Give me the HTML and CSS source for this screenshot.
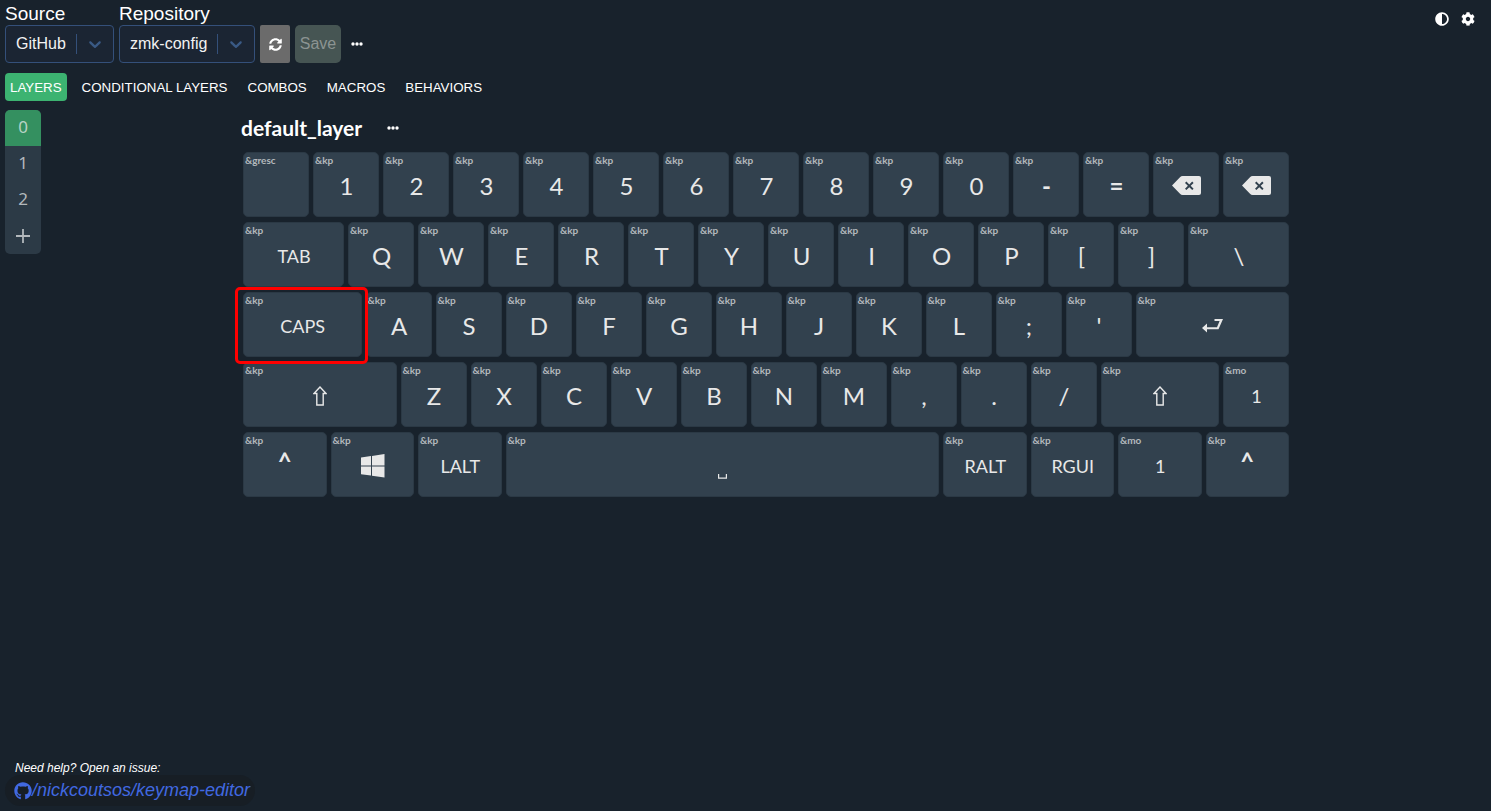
FILE: index.html
```html
<!DOCTYPE html>
<html lang="en">
<head>
<meta charset="utf-8">
<title>Keymap Editor</title>
<link rel="stylesheet" href="styles.css">
</head>
<body>
<svg class="defs" aria-hidden="true">
  <symbol id="chevron" viewBox="0 0 20 20"><path d="M4.516 7.548c.436-.446 1.043-.481 1.576 0L10 11.295l3.908-3.747c.533-.481 1.141-.446 1.574 0 .436.445.408 1.197 0 1.615-.406.418-4.695 4.502-4.695 4.502a1.095 1.095 0 0 1-1.576 0S4.924 9.581 4.516 9.163c-.409-.418-.436-1.170 0-1.615z"/></symbol>
  <symbol id="dots" viewBox="0 0 12 4"><circle cx="2" cy="2" r="1.7"/><circle cx="6" cy="2" r="1.7"/><circle cx="10" cy="2" r="1.7"/></symbol>
  <symbol id="backspace" viewBox="0 0 29 19"><path fill-rule="evenodd" d="M0 9.500 8 1.200C8.800.4 9.600 0 10.600 0H27a2 2 0 0 1 2 2v15a2 2 0 0 1-2 2H10.600c-1 0-1.800-.4-2.600-1.200zM13 6.900l2.900 2.900-2.900 2.900 1.400 1.400 2.900-2.900 2.900 2.900 1.400-1.400-2.900-2.900 2.900-2.900-1.400-1.400-2.900 2.900-2.900-2.900z"/></symbol>
  <symbol id="enter" viewBox="0 0 21 14"><path d="M12.500 0H21L16.500 10.300H5V13.500L0 9 5 4.500V8.300H15L17.600 2H12.500z"/></symbol>
  <symbol id="shift" viewBox="0 0 14 20"><path fill="none" stroke="currentColor" stroke-width="1.400" d="M7 1 1 7.500H3.800V19H10.200V7.500H13z"/></symbol>
  <symbol id="windows" viewBox="0 0 24 24"><path d="M0 3.500 10 2.100V11.400H0zM11 2 23.500 0V11.400H11zM0 12.400H10V21.600L0 20.200zM11 12.400H23.500V23.500L11 21.700z"/></symbol>
  <symbol id="space" viewBox="0 0 9 5"><path fill="none" stroke="currentColor" stroke-width="1.200" d="M.6 0V4.200H8.400V0"/></symbol>
</svg>
<header class="toolbar">
  <div class="sources">
    <div class="field">
      <label for="source">Source</label>
      <div class="picker picker-source"><select id="source"><option>GitHub</option></select><span class="picker-mark"><svg><use href="#chevron"/></svg></span></div>
    </div>
    <div class="field">
      <label for="repo">Repository</label>
      <div class="picker picker-repo"><select id="repo"><option>zmk-config</option></select><span class="picker-mark"><svg><use href="#chevron"/></svg></span></div>
    </div>
    <button class="refresh" aria-label="Refresh"><svg viewBox="0 0 512 512"><path d="M370.720 133.280C339.458 104.008 298.888 87.962 255.848 88c-77.458.068-144.328 53.178-162.791 126.850-1.344 5.363-6.122 9.150-11.651 9.150H24.103c-7.498 0-13.194-6.807-11.807-14.176C33.933 94.924 134.813 8 256 8c66.448 0 126.791 26.136 171.315 68.685L463.030 40.970C478.149 25.851 504 36.559 504 57.941V192c0 13.255-10.745 24-24 24H345.941c-21.382 0-32.090-25.851-16.971-40.971l41.750-41.749zM32 296h134.059c21.382 0 32.090 25.851 16.971 40.971l-41.750 41.750c31.262 29.273 71.835 45.319 114.876 45.280 77.418-.070 144.315-53.144 162.787-126.849 1.344-5.363 6.122-9.150 11.651-9.150h57.304c7.498 0 13.194 6.807 11.807 14.176C478.067 417.076 377.187 504 256 504c-66.448 0-126.791-26.136-171.315-68.685L48.970 471.030C33.851 486.149 8 475.441 8 454.059V320c0-13.255 10.745-24 24-24z"/></svg></button>
    <button class="save" disabled>Save</button>
    <button class="more" aria-label="More actions"><svg><use href="#dots"/></svg></button>
  </div>
  <div class="settings">
    <button aria-label="Theme"><svg viewBox="0 0 512 512"><path d="M8 256c0 136.966 111.033 248 248 248s248-111.034 248-248S392.966 8 256 8 8 119.033 8 256zm248 184V72c101.705 0 184 82.311 184 184 0 101.705-82.311 184-184 184z"/></svg></button>
    <button aria-label="Settings"><svg viewBox="0 0 512 512"><path d="M487.400 315.700l-42.600-24.600c4.300-23.200 4.300-47 0-70.200l42.600-24.600c4.900-2.800 7.100-8.600 5.500-14-11.100-35.600-30-67.800-54.700-94.600-3.800-4.100-10-5.100-14.800-2.300L380.800 110c-17.900-15.400-38.500-27.300-60.800-35.100V25.800c0-5.600-3.900-10.500-9.400-11.700-36.700-8.200-74.300-7.800-109.200 0-5.500 1.200-9.400 6.100-9.400 11.700V75c-22.200 7.900-42.800 19.800-60.800 35.100L88.700 85.500c-4.900-2.800-11-1.900-14.800 2.300-24.700 26.700-43.600 58.900-54.700 94.600-1.700 5.400.6 11.200 5.500 14L67.300 221c-4.300 23.200-4.300 47 0 70.200l-42.600 24.600c-4.900 2.800-7.100 8.600-5.500 14 11.100 35.600 30 67.800 54.700 94.600 3.800 4.100 10 5.100 14.800 2.300l42.600-24.600c17.900 15.400 38.500 27.300 60.800 35.100v49.200c0 5.600 3.900 10.500 9.400 11.700 36.700 8.200 74.300 7.800 109.200 0 5.500-1.200 9.400-6.100 9.400-11.700v-49.200c22.200-7.900 42.800-19.800 60.800-35.100l42.600 24.600c4.900 2.800 11 1.900 14.800-2.300 24.700-26.700 43.600-58.900 54.700-94.600 1.500-5.500-.7-11.300-5.600-14.100zM256 336c-44.100 0-80-35.900-80-80s35.900-80 80-80 80 35.900 80 80-35.900 80-80 80z"/></svg></button>
  </div>
</header>
<nav class="tabs">
  <button class="active">LAYERS</button><button>CONDITIONAL LAYERS</button><button>COMBOS</button><button>MACROS</button><button>BEHAVIORS</button>
</nav>
<div class="workspace">
  <div class="layers">
    <button class="active">0</button><button>1</button><button>2</button>
    <button class="add" aria-label="Add layer"><svg viewBox="0 0 14 14"><path fill="none" stroke="currentColor" stroke-width="1.800" d="M0 7H14M7 0V14"/></svg></button>
  </div>
  <main class="editor">
    <div class="keymap">
      <div class="title"><h1>default_layer</h1><button class="more" aria-label="Layer actions"><svg><use href="#dots"/></svg></button></div>
      <div class="board">
        <button class="key"><small>&amp;gresc</small></button>
        <button class="key"><small>&amp;kp</small>1</button>
        <button class="key"><small>&amp;kp</small>2</button>
        <button class="key"><small>&amp;kp</small>3</button>
        <button class="key"><small>&amp;kp</small>4</button>
        <button class="key"><small>&amp;kp</small>5</button>
        <button class="key"><small>&amp;kp</small>6</button>
        <button class="key"><small>&amp;kp</small>7</button>
        <button class="key"><small>&amp;kp</small>8</button>
        <button class="key"><small>&amp;kp</small>9</button>
        <button class="key"><small>&amp;kp</small>0</button>
        <button class="key strong"><small>&amp;kp</small>-</button>
        <button class="key strong"><small>&amp;kp</small>=</button>
        <button class="key" aria-label="Backspace"><small>&amp;kp</small><svg class="i-backspace"><use href="#backspace"/></svg></button>
        <button class="key" aria-label="Backspace"><small>&amp;kp</small><svg class="i-backspace"><use href="#backspace"/></svg></button>

        <button class="key u6 word"><small>&amp;kp</small>TAB</button>
        <button class="key"><small>&amp;kp</small>Q</button>
        <button class="key"><small>&amp;kp</small>W</button>
        <button class="key"><small>&amp;kp</small>E</button>
        <button class="key"><small>&amp;kp</small>R</button>
        <button class="key"><small>&amp;kp</small>T</button>
        <button class="key"><small>&amp;kp</small>Y</button>
        <button class="key"><small>&amp;kp</small>U</button>
        <button class="key"><small>&amp;kp</small>I</button>
        <button class="key"><small>&amp;kp</small>O</button>
        <button class="key"><small>&amp;kp</small>P</button>
        <button class="key"><small>&amp;kp</small>[</button>
        <button class="key"><small>&amp;kp</small>]</button>
        <button class="key u6"><small>&amp;kp</small>\</button>

        <button class="key u7 word marked"><small>&amp;kp</small>CAPS</button>
        <button class="key"><small>&amp;kp</small>A</button>
        <button class="key"><small>&amp;kp</small>S</button>
        <button class="key"><small>&amp;kp</small>D</button>
        <button class="key"><small>&amp;kp</small>F</button>
        <button class="key"><small>&amp;kp</small>G</button>
        <button class="key"><small>&amp;kp</small>H</button>
        <button class="key"><small>&amp;kp</small>J</button>
        <button class="key"><small>&amp;kp</small>K</button>
        <button class="key"><small>&amp;kp</small>L</button>
        <button class="key"><small>&amp;kp</small>;</button>
        <button class="key"><small>&amp;kp</small>'</button>
        <button class="key u9 word" aria-label="Enter"><small>&amp;kp</small><svg class="i-enter"><use href="#enter"/></svg></button>

        <button class="key u9 word" aria-label="Left shift"><small>&amp;kp</small><svg class="i-shift"><use href="#shift"/></svg></button>
        <button class="key"><small>&amp;kp</small>Z</button>
        <button class="key"><small>&amp;kp</small>X</button>
        <button class="key"><small>&amp;kp</small>C</button>
        <button class="key"><small>&amp;kp</small>V</button>
        <button class="key"><small>&amp;kp</small>B</button>
        <button class="key"><small>&amp;kp</small>N</button>
        <button class="key"><small>&amp;kp</small>M</button>
        <button class="key"><small>&amp;kp</small>,</button>
        <button class="key"><small>&amp;kp</small>.</button>
        <button class="key"><small>&amp;kp</small>/</button>
        <button class="key u7 word" aria-label="Right shift"><small>&amp;kp</small><svg class="i-shift"><use href="#shift"/></svg></button>
        <button class="key word"><small>&amp;mo</small>1</button>

        <button class="key u5 strong high"><small>&amp;kp</small>^</button>
        <button class="key u5 word" aria-label="Left GUI"><small>&amp;kp</small><svg class="i-windows"><use href="#windows"/></svg></button>
        <button class="key u5 word"><small>&amp;kp</small>LALT</button>
        <button class="key u25 low" aria-label="Space"><small>&amp;kp</small><svg class="i-space"><use href="#space"/></svg></button>
        <button class="key u5 word"><small>&amp;kp</small>RALT</button>
        <button class="key u5 word"><small>&amp;kp</small>RGUI</button>
        <button class="key u5 word"><small>&amp;mo</small>1</button>
        <button class="key u5 strong high"><small>&amp;kp</small>^</button>
      </div>
    </div>
  </main>
</div>
<footer class="help">
  <p>Need help? Open an issue:</p>
  <a href="#"><svg viewBox="0 0 496 512"><path d="M165.900 397.400c0 2-2.300 3.600-5.200 3.600-3.300.3-5.600-1.300-5.600-3.600 0-2 2.300-3.600 5.200-3.600 3-.3 5.600 1.300 5.600 3.600zM244.800 8C106.100 8 0 113.300 0 252c0 110.900 69.800 205.800 169.500 239.200 12.800 2.300 17.300-5.600 17.300-12.100 0-6.200-.3-40.400-.3-61.400 0 0-70 15-84.700-29.800 0 0-11.400-29.100-27.800-36.600 0 0-22.900-15.700 1.600-15.400 0 0 24.900 2 38.600 25.800 21.900 38.600 58.600 27.500 72.900 20.900 2.300-16 8.800-27.100 16-33.700-55.900-6.200-112.300-14.300-112.300-110.500 0-27.500 7.600-41.300 23.600-58.900-2.600-6.500-11.100-33.300 2.600-67.900 20.900-6.500 69 27 69 27 20-5.600 41.500-8.500 62.800-8.500s42.800 2.900 62.800 8.500c0 0 48.100-33.600 69-27 13.700 34.700 5.200 61.400 2.600 67.900 16 17.700 25.800 31.500 25.800 58.900 0 96.500-58.900 104.200-114.800 110.500 9.200 7.900 17 22.900 17 46.400 0 33.700-.3 75.400-.3 83.600 0 6.500 4.600 14.400 17.300 12.100C428.200 457.800 496 362.900 496 252 496 113.300 383.500 8 244.800 8z"/></svg>/nickcoutsos/keymap-editor</a>
</footer>
</body>
</html>
```
FILE: styles.css
```css
* { box-sizing: border-box; }

body {
  margin: 0;
  min-height: 100vh;
  display: flex;
  flex-direction: column;
  background: #18222c;
  color: #fff;
  font-family: "Liberation Sans", Arial, sans-serif;
}

button {
  border: 0;
  padding: 0;
  background: none;
  color: inherit;
  font-family: inherit;
  display: flex;
  align-items: center;
  justify-content: center;
}

svg { display: block; fill: currentColor; }
.defs { position: absolute; width: 0; height: 0; }

.toolbar { display: flex; justify-content: space-between; padding: 3px 16px 0 5px; }
.sources { display: flex; align-items: flex-end; gap: 5px; }
.field label { display: block; font-size: 19px; line-height: 22px; }

.picker { position: relative; height: 38px; }
.picker-source { width: 109px; }
.picker-repo { width: 136px; }
.picker select {
  appearance: none;
  width: 100%;
  height: 100%;
  padding: 0 0 2px 10px;
  border: 1px solid #34507a;
  border-radius: 4px;
  background: #1b2533;
  color: #f2f2f2;
  font: 16px "Liberation Sans", Arial, sans-serif;
}
.picker-mark {
  position: absolute;
  top: 9px;
  right: 1px;
  height: 20px;
  padding: 0 8px;
  border-left: 1px solid #34507a;
  color: #3a5a85;
  pointer-events: none;
}
.picker-mark svg { width: 20px; height: 20px; }

.refresh { width: 30px; height: 38px; background: #6b6b6b; border-radius: 2px; }
.refresh svg { width: 13px; height: 13px; }
.save { width: 46px; height: 38px; background: #465553; color: #8c9492; border-radius: 5px; font-size: 16px; }
.more { height: 38px; padding: 0 10px; }
.sources .more { padding: 0 5px; }
.more svg { width: 12px; height: 4px; }

.settings { display: flex; gap: 12px; align-items: flex-start; padding-top: 9px; }
.settings svg { width: 14px; height: 14px; }

.tabs { display: flex; gap: 10px; padding: 10px 5px 9px; }
.tabs button { height: 28px; padding: 0 5px; border-radius: 4px; font-weight: normal; }
.tabs .active { background: #3cb371; }

.workspace { display: flex; align-items: flex-start; padding-left: 5px; flex: 1; }
.layers { width: 36px; border-radius: 5px; overflow: hidden; background: #2c3a46; color: #b3b8bc; }
.layers button { width: 36px; height: 36px; padding-bottom: 3px; font: 17px "Noto Sans", sans-serif; }
.layers .active { background: #349060; color: #b9d3c6; }
.layers .add { padding: 0; }
.layers svg { width: 14px; height: 14px; }

.editor { flex: 1; display: flex; justify-content: center; font-family: Lato, sans-serif; }
.keymap { flex: 0 1 1050px; }
.title { display: flex; align-items: center; gap: 15px; height: 36px; }
.title h1 { margin: 0; font-size: 21px; line-height: 24px; font-weight: bold; }

.board { display: grid; grid-template-columns: repeat(60, minmax(0, 1fr)); grid-auto-rows: 70px; padding-top: 4px; }
.key {
  position: relative;
  grid-column: span 4;
  margin: 2px 2px 3px;
  padding: 1px 0 0 1px;
  border: 1px solid #2b3945;
  border-radius: 5px;
  background: #32414e;
  color: #e8e8e8;
  font-size: 24px;
}
.u5 { grid-column: span 5; }
.u6 { grid-column: span 6; }
.u7 { grid-column: span 7; }
.u9 { grid-column: span 9; }
.u25 { grid-column: span 25; }
.word { padding-top: 3px; font-size: 18px; }
.strong { font-weight: bold; }
.high { padding: 0 0 6px; }
.key small {
  position: absolute;
  top: 1px;
  left: 1px;
  color: #b4b9bd;
  font-size: 10px;
  font-weight: bold;
  line-height: 13px;
}
.marked { z-index: 1; }
.marked::after {
  content: "";
  position: absolute;
  inset: -6px -7px -8px -9px;
  border: 3px solid #f00;
  border-radius: 5px;
}
.low { padding-top: 24px; }
.i-backspace { width: 29px; height: 19px; }
.i-enter { width: 21px; height: 14px; }
.i-shift { width: 14px; height: 20px; }
.i-windows { width: 24px; height: 24px; }
.i-space { width: 9px; height: 5px; }

.help { align-self: flex-start; padding: 0 5px 5px; font-style: italic; }
.help p { margin: 0; padding-left: 10px; font-size: 12px; line-height: 14px; }
.help a {
  display: flex;
  align-items: center;
  height: 31px;
  padding: 0 5px 0 9px;
  border-radius: 16px;
  background: #171e25;
  color: #4169e1;
  font-size: 18px;
  text-decoration: none;
}
.help svg { width: 18px; height: 18px; }
```
